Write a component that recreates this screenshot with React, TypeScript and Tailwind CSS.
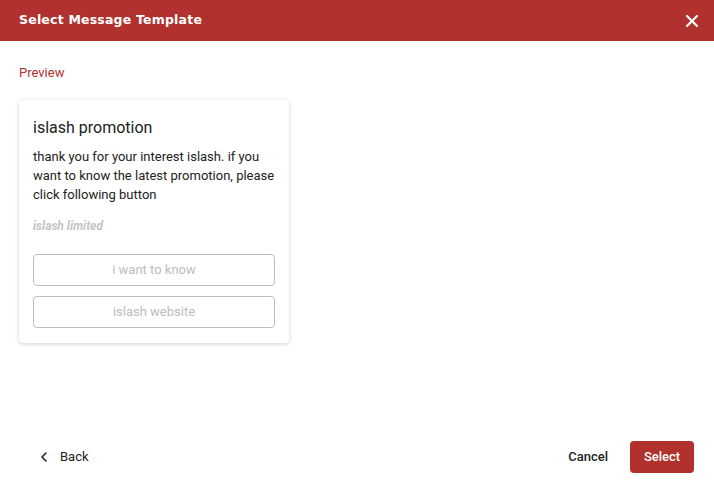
import { X, ChevronLeft } from 'lucide-react'

function TemplateCard() {
  return (
    <div className="w-[270px] rounded-[4px] bg-white px-[14px] pb-[15px] pt-[18px] shadow-[0_1px_4px_rgba(0,0,0,0.18)]">
      <div className="text-[16px] leading-[20px] text-[#222]">islash promotion</div>
      <p className="mt-[9px] text-[13px] leading-[19px] text-[#222]">
        thank you for your interest islash. if you want to know the latest promotion, please click following button
      </p>
      <div className="mt-[14px] text-[12px] font-bold italic leading-[16px] text-[#c4c4c4]">islash limited</div>
      <div className="mt-[20px] flex flex-col gap-[10px]">
        <div className="flex h-[32px] items-center justify-center rounded-[4px] border border-[#bdbdbd] text-[13px] text-[#bdbdbd]">
          i want to know
        </div>
        <div className="flex h-[32px] items-center justify-center rounded-[4px] border border-[#bdbdbd] text-[13px] text-[#bdbdbd]">
          islash website
        </div>
      </div>
    </div>
  )
}

export default function App() {
  return (
    <div className="flex h-[494px] w-[714px] flex-col bg-white font-['Roboto',sans-serif]">
      <header className="flex h-[41px] items-center justify-between bg-[#b0312d] pl-[19px] pr-[12px]">
        <h1 className="font-['DejaVu_Sans',sans-serif] text-[12.5px] font-bold tracking-[0.2px] text-white">
          Select Message Template
        </h1>
        <X className="h-[20px] w-[20px] text-white" strokeWidth={2.6} />
      </header>
      <main className="flex-1 px-[19px] pt-[24px]">
        <div className="text-[13px] leading-[16px] text-[#b0312d]">Preview</div>
        <div className="mt-[19px]">
          <TemplateCard />
        </div>
      </main>
      <footer className="flex items-center justify-between pb-[21px] pl-[36px] pr-[20px]">
        <button className="flex items-center gap-[8px] text-[13px] text-[#222]">
          <ChevronLeft className="h-[16px] w-[16px]" strokeWidth={2.4} />
          Back
        </button>
        <div className="flex items-center gap-[22px]">
          <button className="text-[13px] font-medium text-[#222]">Cancel</button>
          <button className="h-[32px] w-[64px] rounded-[4px] bg-[#b0312d] text-[13px] font-medium text-white">
            Select
          </button>
        </div>
      </footer>
    </div>
  )
}
